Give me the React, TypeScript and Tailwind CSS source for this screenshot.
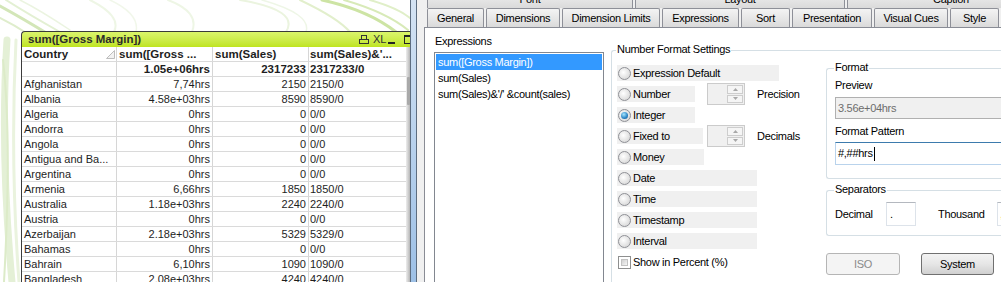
import React from "react";

const rows: [string, string, string, string][] = [
  ["Afghanistan", "7,74hrs", "2150", "2150/0"],
  ["Albania", "4.58e+03hrs", "8590", "8590/0"],
  ["Algeria", "0hrs", "0", "0/0"],
  ["Andorra", "0hrs", "0", "0/0"],
  ["Angola", "0hrs", "0", "0/0"],
  ["Antigua and Ba...", "0hrs", "0", "0/0"],
  ["Argentina", "0hrs", "0", "0/0"],
  ["Armenia", "6,66hrs", "1850", "1850/0"],
  ["Australia", "1.18e+03hrs", "2240", "2240/0"],
  ["Austria", "0hrs", "0", "0/0"],
  ["Azerbaijan", "2.18e+03hrs", "5329", "5329/0"],
  ["Bahamas", "0hrs", "0", "0/0"],
  ["Bahrain", "6,10hrs", "1090", "1090/0"],
  ["Bangladesh", "2.08e+03hrs", "4240", "4240/0"],
];

function Swirl() {
  return (
    <svg className="absolute inset-0 pointer-events-none" width="410" height="282">
      <g fill="none" strokeLinecap="round">
        <path d="M0 6 Q 22 18 48 34" stroke="#d3e6b8" strokeWidth="3" />
        <path d="M0 18 Q 14 25 28 34" stroke="#dfedcc" strokeWidth="2" />
        <path d="M6 0 Q 28 14 60 32" stroke="#e3f0d3" strokeWidth="2" />
        <path d="M20 0 Q 40 10 70 30" stroke="#ebf4e0" strokeWidth="1.5" />
        <path d="M7 40 Q 0 150 12 282" stroke="#e4f0d6" strokeWidth="7" />
        <path d="M16 40 Q 10 160 19 282" stroke="#eaf3de" strokeWidth="3" />
        <path d="M3 60 Q 12 140 4 282" stroke="#dcebc8" strokeWidth="2" />
        <path d="M90 0 Q 122 16 114 32" stroke="#eef6e5" strokeWidth="2" />
        <path d="M110 0 Q 140 14 136 32" stroke="#f1f7ea" strokeWidth="1.5" />
        <path d="M168 0 Q 200 12 192 32" stroke="#eef6e5" strokeWidth="2" />
        <path d="M240 0 Q 300 10 286 32" stroke="#ebf4df" strokeWidth="2" />
        <path d="M262 0 Q 312 14 306 32" stroke="#eef6e6" strokeWidth="1.5" />
        <path d="M300 0 Q 338 18 350 32" stroke="#e2efcc" strokeWidth="2" />
        <path d="M322 0 Q 368 10 396 32" stroke="#cde4a4" strokeWidth="3" />
        <path d="M344 0 Q 386 12 408 30" stroke="#d8eab8" strokeWidth="2" />
        <path d="M370 0 Q 398 8 410 18" stroke="#e0efc8" strokeWidth="2" />
      </g>
    </svg>
  );
}

function Radio({ checked }: { checked?: boolean }) {
  return (
    <span className="w-[13px] h-[13px] shrink-0 rounded-full border border-[#8f9096] bg-[radial-gradient(circle_at_40%_40%,#ffffff,#e2e2e2_60%,#cfcfcf)] flex items-center justify-center">
      {checked && (
        <span className="w-[7px] h-[7px] rounded-full bg-[radial-gradient(circle_at_40%_35%,#a6e6ff,#2a83c4_60%,#0f4f86)]" />
      )}
    </span>
  );
}

function Spinner() {
  return (
    <div className="w-[38px] h-[22px] shrink-0 border border-[#cbcbcb] bg-[#f0f0f0] flex justify-end p-[1px]">
      <div className="w-[16px] flex flex-col gap-[1px]">
        <div className="flex-1 border border-[#cdcdcd] bg-[#f5f5f5] flex items-center justify-center">
          <svg width="5" height="3">
            <path d="M0 3 L2.5 0 L5 3Z" fill="#a8a8a8" />
          </svg>
        </div>
        <div className="flex-1 border border-[#cdcdcd] bg-[#f5f5f5] flex items-center justify-center">
          <svg width="5" height="3">
            <path d="M0 0 L2.5 3 L5 0Z" fill="#a8a8a8" />
          </svg>
        </div>
      </div>
    </div>
  );
}

function RadioRow({
  label,
  w,
  checked,
  extra,
}: {
  label: string;
  w: string;
  checked?: boolean;
  extra?: React.ReactNode;
}) {
  return (
    <div className="flex items-center h-[16px] mb-[5px]">
      <div className={`${w} h-[16px] bg-[#f0f0f0] flex items-center shrink-0`}>
        <span className="ml-[1px]">
          <Radio checked={checked} />
        </span>
        <span className="ml-[2px] leading-[13px] whitespace-nowrap">{label}</span>
      </div>
      {extra}
    </div>
  );
}

const tabs2 = [
  { t: "General", w: "w-[57px]" },
  { t: "Dimensions", w: "w-[74px]" },
  { t: "Dimension Limits", w: "w-[98px]" },
  { t: "Expressions", w: "w-[77px]" },
  { t: "Sort", w: "w-[49px]" },
  { t: "Presentation", w: "w-[80px]" },
  { t: "Visual Cues", w: "w-[74px]" },
  { t: "Style", w: "w-[49px]" },
];

const tabs1 = [
  { t: "Font", w: "w-[206px]" },
  { t: "Layout", w: "w-[210px]" },
  { t: "Caption", w: "w-[208px]" },
];

function Tab({ t, w }: { t: string; w: string }) {
  return (
    <div
      className={`${w} h-[19px] shrink-0 border border-b-0 border-[#8e9098] rounded-t-[2px] bg-linear-to-b from-[#f4f4f4] to-[#dadada] flex items-center justify-center leading-[13px] whitespace-nowrap`}
    >
      {t}
    </div>
  );
}

export default function App() {
  return (
    <div className="w-[1001px] h-[282px] overflow-hidden flex bg-white">
      {/* QlikView sheet */}
      <div className="relative w-[410px] h-[282px] overflow-hidden shrink-0 bg-white">
        <Swirl />
        <div className="relative ml-[21px] mt-[31px] w-[392px] font-['Liberation_Sans',Arial,sans-serif] text-[11px] text-[#1e1e1e]">
          {/* title bar */}
          <div className="h-[16px] border-t border-l border-[#3a3a3a] rounded-tl-[4px] bg-linear-to-b from-[#dbf56a] to-[#bfe41c] flex items-center">
            <span className="flex-1 pl-[6px] font-bold text-[11.5px] leading-[15px] text-[#2b2b2b] whitespace-nowrap">
              sum([Gross Margin])
            </span>
            <div className="flex items-center h-[15px] shrink-0">
              <svg width="10" height="9" className="shrink-0">
                <rect x="2.5" y="0.5" width="5" height="4" fill="none" stroke="#333" />
                <rect x="0.5" y="4.5" width="9" height="4" fill="none" stroke="#333" />
              </svg>
              <span className="ml-[4px] w-[11px] text-[11px] leading-[13px] text-[#333]">XL</span>
              <span className="ml-[4px] w-[7px] h-[2px] bg-[#222] mt-[7px]" />
              <span className="ml-[9px] w-[9px] h-[9px] border border-t-2 border-[#222]" />
            </div>
          </div>
          <div className="flex">
            <div className="w-[385px] border-l border-[#3c3c3c] bg-white">
              {/* header */}
              <div className="flex h-[15px] border-b border-[#dadada] font-bold text-[11.5px]">
                <div className="w-[95px] border-r border-[#d6d6d6] pl-[2px] leading-[14px] flex items-center">
                  <span className="flex-1">Country</span>
                  <svg width="9" height="9" className="mr-[1px] mt-[1px]">
                    <path d="M8.5 0.5 L8.5 8.5 L0.5 8.5Z" fill="#f2f2f2" stroke="#bdbdbd" />
                  </svg>
                </div>
                <div className="w-[96px] border-r border-[#d6d6d6] pl-[2px] leading-[14px] whitespace-nowrap overflow-hidden">
                  sum([Gross ...
                </div>
                <div className="w-[96px] border-r border-[#d6d6d6] pl-[2px] leading-[14px] whitespace-nowrap overflow-hidden">
                  sum(Sales)
                </div>
                <div className="w-[97px] pl-[1px] leading-[14px] whitespace-nowrap overflow-hidden">
                  sum(Sales)&amp;'...
                </div>
              </div>
              {/* totals */}
              <div className="flex h-[15px] border-b border-[#dadada] font-bold text-[11.5px]">
                <div className="w-[95px] border-r border-[#d6d6d6]" />
                <div className="w-[96px] border-r border-[#d6d6d6] pr-[2px] text-right leading-[14px]">1.05e+06hrs</div>
                <div className="w-[96px] border-r border-[#d6d6d6] pr-[2px] text-right leading-[14px]">2317233</div>
                <div className="w-[97px] pl-[1px] leading-[14px]">2317233/0</div>
              </div>
              {rows.map((r) => (
                <div key={r[0]} className="flex h-[15px] border-b border-[#dadada]">
                  <div className="w-[95px] border-r border-[#d6d6d6] pl-[2px] leading-[14px] whitespace-nowrap overflow-hidden">
                    {r[0]}
                  </div>
                  <div className="w-[96px] border-r border-[#d6d6d6] pr-[2px] text-right leading-[14px]">{r[1]}</div>
                  <div className="w-[96px] border-r border-[#d6d6d6] pr-[2px] text-right leading-[14px]">{r[2]}</div>
                  <div className="w-[97px] pl-[1px] leading-[14px]">{r[3]}</div>
                </div>
              ))}
            </div>
            <div className="w-[7px] bg-linear-to-r from-[#eeeeee] to-[#8e8e8e] flex flex-col">
              <div className="h-[30px]" />
              <div className="h-[28px] ml-[1px] w-[3px] rounded-[1px] bg-[#a9a9a9]" />
            </div>
          </div>
        </div>
      </div>

      {/* dialog frame */}
      <div className="w-[7px] h-[282px] shrink-0 border-l border-[#3f4a57] border-r border-[#5d6d80] bg-linear-to-b from-[#d4e3f3] to-[#9dc0e6]" />

      {/* dialog body */}
      <div className="flex-1 h-[282px] bg-[#f0f0f0] flex flex-col font-['Liberation_Sans',Arial,sans-serif] text-[11px] tracking-[-0.3px] text-black overflow-hidden">
        <div className="h-[8px] overflow-hidden ml-[10px] shrink-0">
          <div className="flex gap-[2px] -mt-[11px]">
            {tabs1.map((t) => (
              <Tab key={t.t} t={t.t} w={t.w} />
            ))}
          </div>
        </div>
        <div className="h-[19px] ml-[10px] flex gap-[2px] shrink-0">
          {tabs2.map((t) => (
            <Tab key={t.t} t={t.t} w={t.w} />
          ))}
        </div>
        <div className="ml-[7px] flex-1 border-l border-t border-[#898c95] bg-white flex">
          {/* expressions list */}
          <div className="ml-[9px] w-[170px] shrink-0">
            <div className="pt-[7px] pl-[1px] leading-[13px]">Expressions</div>
            <div className="mt-[4px] h-[240px] border border-[#828790] p-[1px] bg-white">
              <div className="h-[16px] leading-[16px] pl-[2px] bg-[#3399ff] text-white whitespace-nowrap">
                sum([Gross Margin])
              </div>
              <div className="h-[16px] leading-[16px] pl-[2px] whitespace-nowrap">sum(Sales)</div>
              <div className="h-[16px] leading-[16px] pl-[2px] whitespace-nowrap">
                sum(Sales)&amp;'/' &amp;count(sales)
              </div>
            </div>
          </div>

          {/* Number format settings group */}
          <div className="ml-[7px] mt-[22px] h-[260px] relative border border-r-0 border-[#d5dfe5] rounded-l-[3px] flex-1 pl-[5px] pt-[14px] flex">
            <span className="absolute -top-[8px] left-[4px] bg-white px-[1px] leading-[13px] whitespace-nowrap">
              Number Format Settings
            </span>
            <div className="w-[209px] shrink-0">
              <RadioRow label="Expression Default" w="w-[162px]" />
              <RadioRow
                label="Number"
                w="w-[78px]"
                extra={
                  <>
                    <span className="ml-[12px]">
                      <Spinner />
                    </span>
                    <span className="ml-[12px] leading-[13px]">Precision</span>
                  </>
                }
              />
              <RadioRow label="Integer" w="w-[78px]" checked />
              <RadioRow
                label="Fixed to"
                w="w-[86px]"
                extra={
                  <>
                    <span className="ml-[4px]">
                      <Spinner />
                    </span>
                    <span className="ml-[12px] leading-[13px]">Decimals</span>
                  </>
                }
              />
              <RadioRow label="Money" w="w-[87px]" />
              <RadioRow label="Date" w="w-[140px]" />
              <RadioRow label="Time" w="w-[140px]" />
              <RadioRow label="Timestamp" w="w-[140px]" />
              <RadioRow label="Interval" w="w-[140px]" />
              <div className="flex items-center h-[16px] mt-[4px]">
                <span className="ml-[1px] w-[13px] h-[13px] border border-[#8e8f8f] p-[2px] bg-white">
                  <span className="block w-full h-full border border-[#c2c2c2] bg-linear-to-br from-[#d0d0d0] to-[#f6f6f6]" />
                </span>
                <span className="ml-[2px] leading-[13px] whitespace-nowrap">Show in Percent (%)</span>
              </div>
            </div>

            {/* right column */}
            <div className="flex-1">
              <div className="mt-[3px] h-[111px] relative border border-r-0 border-[#d5dfe5] rounded-l-[3px] pl-[8px] pt-[10px]">
                <span className="absolute -top-[8px] left-[7px] bg-white px-[1px] leading-[13px]">Format</span>
                <div className="leading-[13px]">Preview</div>
                <div className="mt-[5px] h-[22px] border border-r-0 border-[#b0b0b0] bg-[#f0f0f0] pl-[2px] flex items-center text-[#6d6d6d] leading-[13px]">
                  3.56e+04hrs
                </div>
                <div className="mt-[6px] leading-[13px]">Format Pattern</div>
                <div className="mt-[4px] h-[23px] border border-r-0 border-[#b9d3ec] border-t-[#3d7bad] bg-white pl-[2px] flex items-center leading-[13px]">
                  <span>#,##hrs</span>
                  <span className="ml-[1px] w-[1px] h-[14px] bg-black" />
                </div>
              </div>
              <div className="mt-[11px] h-[46px] relative border border-r-0 border-[#d5dfe5] rounded-l-[3px] pl-[8px] pt-[11px]">
                <span className="absolute -top-[8px] left-[7px] bg-white px-[1px] leading-[13px]">Separators</span>
                <div className="flex items-center">
                  <span className="w-[51px] shrink-0 leading-[13px]">Decimal</span>
                  <div className="w-[30px] h-[24px] shrink-0 border border-[#dde3ea] border-t-[#b4b8bf] bg-white pl-[3px] flex items-center leading-[13px]">
                    .
                  </div>
                  <span className="ml-[22px] w-[59px] shrink-0 leading-[13px]">Thousand</span>
                  <div className="w-[30px] h-[24px] shrink-0 border border-r-0 border-[#dde3ea] border-t-[#b4b8bf] bg-white pl-[2px] flex items-center leading-[13px] text-[#c08a20]">
                    ,
                  </div>
                </div>
              </div>
              <div className="mt-[17px] flex">
                <div className="w-[74px] h-[22px] shrink-0 border border-[#b5b5b5] rounded-[3px] bg-[#f4f4f4] flex items-center justify-center text-[#8a8a8a] leading-[13px]">
                  ISO
                </div>
                <div className="ml-[21px] w-[73px] h-[22px] shrink-0 border border-[#707070] rounded-[3px] bg-linear-to-b from-[#f3f3f3] via-[#e6e6e6] to-[#d0d0d0] flex items-center justify-center leading-[13px]">
                  System
                </div>
              </div>
            </div>
          </div>
        </div>
      </div>
    </div>
  );
}
